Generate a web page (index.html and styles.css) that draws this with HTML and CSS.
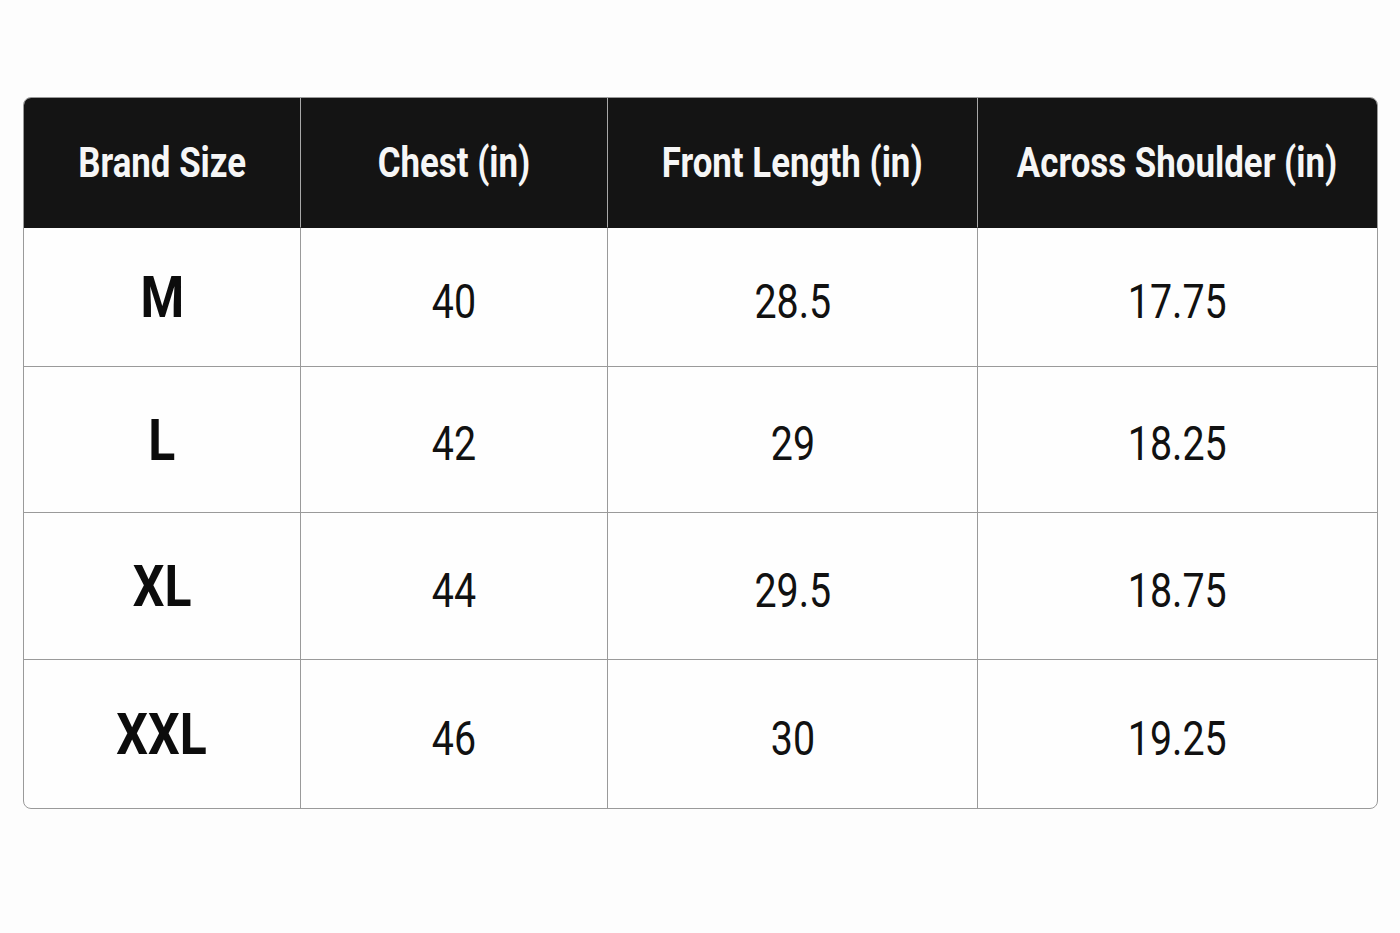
FILE: index.html
```html
<!DOCTYPE html>
<html>
<head>
<meta charset="utf-8">
<link rel="stylesheet" href="styles.css">
</head>
<body>
<div class="page">
  <div class="chart">
    <div class="cell head"><span class="t">Brand Size</span></div>
    <div class="cell head"><span class="t">Chest (in)</span></div>
    <div class="cell head"><span class="t">Front Length (in)</span></div>
    <div class="cell head last"><span class="t">Across Shoulder (in)</span></div>

    <div class="cell size r1"><span class="t">M</span></div>
    <div class="cell num r1"><span class="t">40</span></div>
    <div class="cell num r1"><span class="t">28.5</span></div>
    <div class="cell num r1 last"><span class="t">17.75</span></div>

    <div class="cell size r2"><span class="t">L</span></div>
    <div class="cell num r2"><span class="t">42</span></div>
    <div class="cell num r2"><span class="t">29</span></div>
    <div class="cell num r2 last"><span class="t">18.25</span></div>

    <div class="cell size r3"><span class="t">XL</span></div>
    <div class="cell num r3"><span class="t">44</span></div>
    <div class="cell num r3"><span class="t">29.5</span></div>
    <div class="cell num r3 last"><span class="t">18.75</span></div>

    <div class="cell size r4 bottom"><span class="t">XXL</span></div>
    <div class="cell num r4 bottom"><span class="t">46</span></div>
    <div class="cell num r4 bottom"><span class="t">30</span></div>
    <div class="cell num r4 bottom last"><span class="t">19.25</span></div>
  </div>
</div>
</body>
</html>
```

FILE: styles.css
```css
html, body {
  margin: 0;
  padding: 0;
  background: #fdfdfd;
}
.page {
  padding: 97px 22px 0 23px;
  font-family: Roboto, "Liberation Sans", sans-serif;
}
.chart {
  display: grid;
  grid-template-columns: 277px 307px 370px 1fr;
  grid-template-rows: 130px 139px 146px 147px 148px;
  border: 1px solid #9a9a9a;
  border-radius: 8px;
  overflow: hidden;
  background: #fefefe;
  width: 1355px;
  box-sizing: border-box;
}
.cell {
  display: flex;
  align-items: center;
  justify-content: center;
  border-right: 1px solid #9a9a9a;
  border-bottom: 1px solid #9a9a9a;
}
.cell.last { border-right: none; }
.cell.bottom { border-bottom: none; }
.head {
  background: #141414;
  color: #f6f6f6;
  font-weight: 700;
  font-size: 42px;
  border-right-color: #a8a8a8;
  border-bottom-color: #141414;
}
.t {
  display: inline-block;
  transform: scaleX(0.83);
  white-space: nowrap;
}
.size {
  color: #0c0c0c;
  font-weight: 700;
  font-size: 58px;
}
.size .t { transform: scaleX(0.86); }
.num {
  color: #111;
  font-weight: 400;
  font-size: 48px;
  padding-top: 8px;
}
.num .t { transform: scaleX(0.82); }
```
